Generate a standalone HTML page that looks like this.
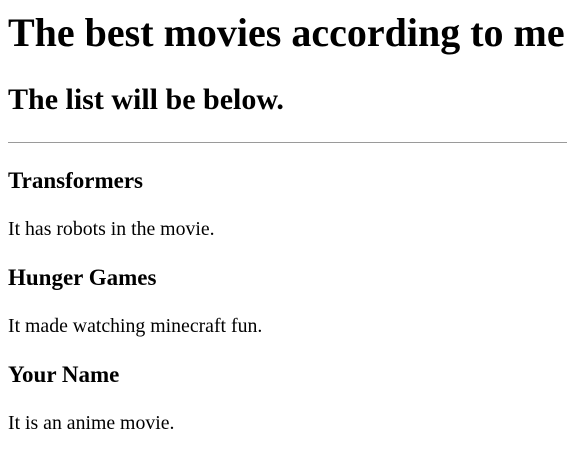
<!DOCTYPE html>
<html><head><style>
body{margin:0;padding:11px 8px 0;font-family:"Liberation Serif",serif;color:#000;background:#fff}
h1{font-size:40px;line-height:44px;margin:0 0 28px;font-weight:bold;white-space:nowrap}
h2{font-size:30px;line-height:33px;margin:0 0 26px;font-weight:bold}
hr{border:none;border-top:1px solid #9a9a9a;height:0;margin:0 -8px 25px 0}
h3{font-size:23px;line-height:26px;margin:0 0 24px;font-weight:bold}
p{font-size:19.8px;line-height:22px;margin:0 0 25px}
</style></head><body>
<h1>The best movies according to me</h1>
<h2>The list will be below.</h2>
<hr>
<h3>Transformers</h3>
<p>It has robots in the movie.</p>
<h3>Hunger Games</h3>
<p>It made watching minecraft fun.</p>
<h3>Your Name</h3>
<p>It is an anime movie.</p>
</body></html>
